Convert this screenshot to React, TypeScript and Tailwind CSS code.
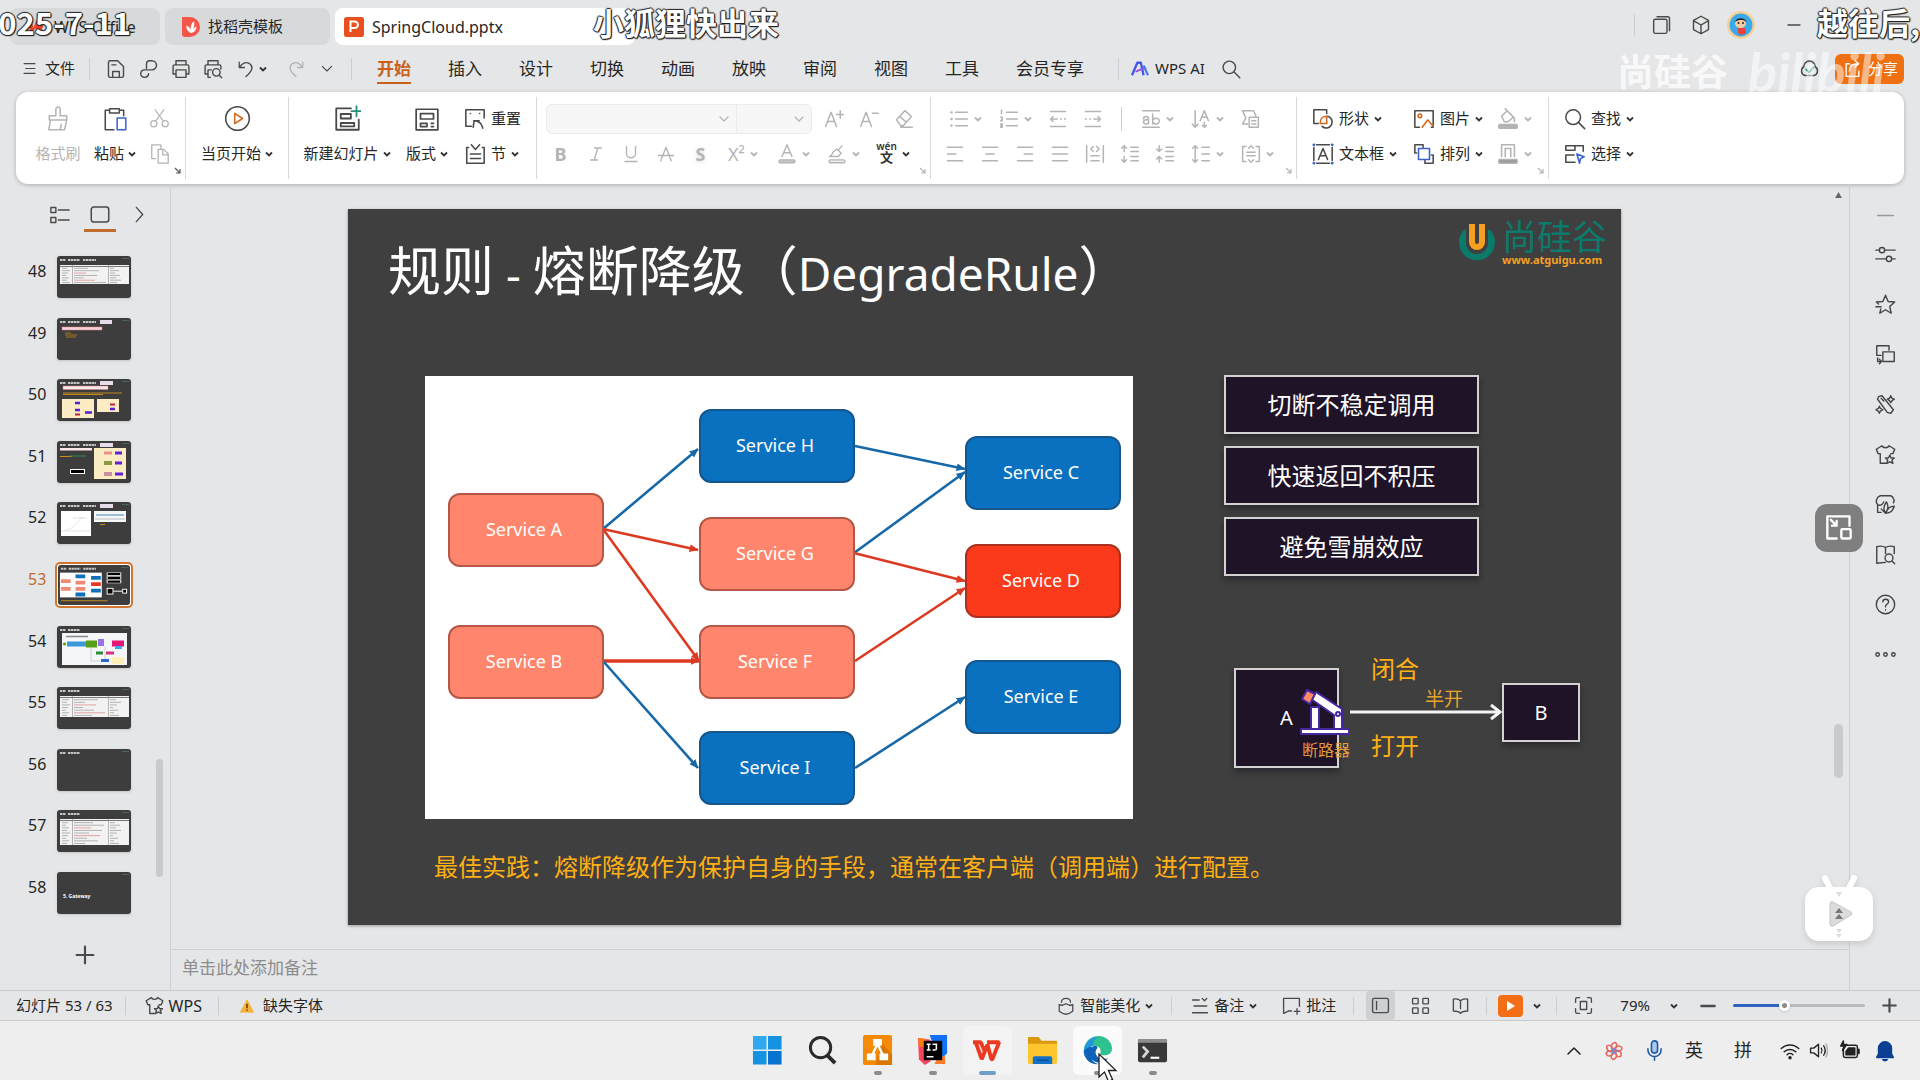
import type { ReactNode } from "react";

/* ---------- icon helpers ---------- */

type IconProps = { children: ReactNode; size?: number; color?: string; sw?: number };

function Icon({ children, size = 22, color = "#4a4a4a", sw = 1.7 }: IconProps) {
  return (
    <svg width={size} height={size} viewBox="0 0 24 24" fill="none" stroke={color} strokeWidth={sw} strokeLinecap="round" strokeLinejoin="round" className="shrink-0" aria-hidden="true">
      {children}
    </svg>
  );
}

function Caret({ color = "#333333" }: { color?: string }) {
  return (
    <svg width="8" height="8" viewBox="0 0 8 8" fill="none" stroke={color} strokeWidth="1.8" className="shrink-0" aria-hidden="true">
      <path d="M1 2.5 4 5.5 7 2.5" />
    </svg>
  );
}

const FAINT = "#b4b4b4";

function VSep({ className = "" }: { className?: string }) {
  return <span className={"w-px shrink-0 bg-[#cdced0] " + className} />;
}

function Corner({ color = "#b4b4b4" }: { color?: string }) {
  return (
    <svg width="7" height="7" viewBox="0 0 7 7" fill="none" stroke={color} strokeWidth="1.2" className="absolute right-1 bottom-[5px]" aria-hidden="true">
      <path d="M1 1 6 6M6 2V6H2" />
    </svg>
  );
}

/* ---------- title bar ---------- */

function TitleBar() {
  return (
    <header className="flex h-[45px] shrink-0 pt-2 pl-[10px] text-[15px]">
      <button className="flex w-[150px] items-center gap-2 rounded-lg bg-[#d8d9da] pl-4 text-base">
        <svg width="20" height="16" viewBox="0 0 24 20" aria-hidden="true"><path d="M1 2h5l3 9 3-9h11l-5 16h-5l-2-7-3 7H6z" fill="#e8452c" /></svg>
        WPS Office
      </button>
      <button className="ml-[5px] flex w-[165px] items-center gap-2 rounded-lg bg-[#d8d9da] pl-[17px]">
        <svg width="18" height="20" viewBox="0 0 18 20" aria-hidden="true">
          <path d="M0 0h8a10 10 0 0 1 0 20H3a3 3 0 0 1-3-3z" fill="#f4574a" />
          <path d="M9 16C5 14 4 11 4.500 8.500 7 10 8 11 8.500 13 8.500 9 9.500 6 12 4c.5 3 .5 5-1 8 1-1 2-2 3.500-2.500C14.500 13 12 15.500 9 16z" fill="#fff" />
        </svg>
        找稻壳模板
      </button>
      <button className="ml-[5px] flex w-[300px] items-center gap-2 rounded-lg bg-white pl-[9px] text-base">
        <svg width="20" height="20" viewBox="0 0 20 20" aria-hidden="true">
          <rect width="20" height="20" rx="2.500" fill="#e9501f" />
          <path d="M6.500 15V4.500h4.200a3.200 3.200 0 0 1 0 6.500H6.500" fill="none" stroke="#fff" strokeWidth="2" />
        </svg>
        SpringCloud.pptx
      </button>
      <div className="mr-[117px] ml-auto flex items-center pb-[3px]">
        <VSep className="mr-4 h-[22px]" />
        <button aria-label="窗口" className="flex w-10 pl-px"><Icon size={20}><rect x="2" y="5" width="16" height="17" rx="2" /><path d="M6 2h13a2 2 0 0 1 2 2v15" /></Icon></button>
        <button aria-label="应用" className="flex w-9"><Icon size={20}><path d="M12 1.500 21 6.500v11L12 22.500 3 17.500v-11zM3.500 7 12 12l8.500-5M12 12v10" /></Icon></button>
        <button aria-label="账号" className="mr-[30px] flex">
          <svg width="28" height="28" viewBox="0 0 28 28" aria-hidden="true">
            <circle cx="14" cy="14" r="12.700" fill="#3aa9ea" stroke="#f7cf95" strokeWidth="2.500" />
            <ellipse cx="13.500" cy="12.500" rx="5.500" ry="4.500" fill="#f5cba6" />
            <path d="M8 11c1-5 10-5 12 0-2-1.500-4-2-6-2s-4 .5-6 2z" fill="#26242b" />
            <circle cx="11.500" cy="12" r="1" fill="#222" /><circle cx="16" cy="12" r="1" fill="#222" />
            <path d="M11 17h7l1 5c-3 2-6 2-8 0z" fill="#e8403a" />
          </svg>
        </button>
        <button aria-label="最小化" className="flex"><Icon size={18}><path d="M4 12h16" /></Icon></button>
      </div>
    </header>
  );
}

/* ---------- menu row ---------- */

const MENUS = ["插入", "设计", "切换", "动画", "放映", "审阅", "视图", "工具", "会员专享"];

function MenuRow() {
  return (
    <nav className="flex h-[47px] shrink-0 items-center pl-[23px]">
      <button className="flex items-center gap-[9px] text-[15px]">
        <Icon size={13} sw={2.2}><path d="M2 3h20M5 12h17M2 21h20" /></Icon>
        文件
      </button>
      <VSep className="mr-4 ml-[14px] h-[22px]" />
      <div className="flex items-center">
        <button aria-label="保存" className="flex w-[33px]"><Icon size={20}><path d="M5 2h9l7 7v11a2 2 0 0 1-2 2H5a2 2 0 0 1-2-2V4a2 2 0 0 1 2-2zM8 22v-7h8v7M7 7h5" /></Icon></button>
        <button aria-label="导出PDF" className="flex w-8"><Icon size={20}><path d="M9 11V6a4 4 0 0 1 4-4h2.500a5.500 5.500 0 0 1 0 11H6.500a4.500 4.500 0 0 0 0 9c3 0 5-1.500 5-4.500" /></Icon></button>
        <button aria-label="打印" className="flex w-8"><Icon size={20}><path d="M6 7V2h12v5M6 18H2.500V9a2 2 0 0 1 2-2h15a2 2 0 0 1 2 2v9H18M6 13h12v9H6z" /></Icon></button>
        <button aria-label="打印预览" className="flex w-[34px]"><Icon size={20}><path d="M6 7V2h12v5M6 18H2.500V9a2 2 0 0 1 2-2h15a2 2 0 0 1 2 2v3M9 22H6v-9h4" /><circle cx="16" cy="16" r="4.500" /><path d="m19.500 19.500 3 3" /></Icon></button>
        <button aria-label="撤销" className="flex w-[50px] items-center gap-1"><Icon size={18}><path d="M3 3v7h7M3.500 9.500C7 3 13 2 17 5c5 4 4 9-5 17" /></Icon><Caret /></button>
        <button aria-label="恢复" className="flex w-8"><Icon size={18} color={FAINT}><path d="M21 3v7h-7M20.500 9.500C17 3 11 2 7 5c-5 4-4 9 5 17" /></Icon></button>
        <button aria-label="更多" className="flex w-5"><Icon size={16}><path d="m5 8 7 7 7-7" /></Icon></button>
      </div>
      <VSep className="mr-[25px] ml-[12px] h-[22px]" />
      <div className="flex items-center gap-[37px] text-[17px]">
        <button className="relative font-bold text-[#c9611a] after:absolute after:inset-x-0 after:-bottom-[3px] after:h-[2px] after:bg-[#c9611a]">开始</button>
        {MENUS.map((m) => (
          <button key={m} className="whitespace-nowrap">{m}</button>
        ))}
      </div>
      <VSep className="mr-[11px] ml-[34px] h-[22px]" />
      <button className="flex items-center gap-[5px] text-[15px] whitespace-nowrap">
        <svg width="20" height="16" viewBox="0 0 20 18" aria-hidden="true">
          <path d="M1 16 7 2h4l3 14" fill="none" stroke="#4457e8" strokeWidth="2.600" strokeLinejoin="round" />
          <path d="M5 12c4-1 6-4 12-4" fill="none" stroke="#a04be0" strokeWidth="2.200" />
          <path d="m14 5 5 11" stroke="#3f7cf4" strokeWidth="2.400" />
        </svg>
        WPS AI
      </button>
      <button aria-label="搜索" className="ml-4 flex"><Icon size={20}><circle cx="10" cy="10" r="7.500" /><path d="m16 16 6.500 6.500" /></Icon></button>
      <div className="mr-4 ml-auto flex items-center">
        <button aria-label="云同步" className="mr-[15px] flex">
          <Icon size={21}><path d="M7 20a5.500 5.500 0 0 1-1.500-10 6.500 6.500 0 0 1 13 0A5.500 5.500 0 0 1 17 20z" /><path d="m8 13 3.500 3.500 5-6" stroke="#1e9a72" /></Icon>
        </button>
        <button className="flex h-[30px] w-[69px] items-center gap-[6px] rounded-md bg-[#ee7012] pl-2 text-[15px] text-white">
          <Icon size={19} color="#ffffff"><path d="M8 6H4v16h16v-7M8 15c0-6 4-9 11-9M15 2l5 4-5 4" /></Icon>
          分享
        </button>
      </div>
    </nav>
  );
}

/* ---------- ribbon ---------- */

function BigButton({ icon, label, caret, className, faint }: { icon: ReactNode; label: string; caret?: boolean; className: string; faint?: boolean }) {
  return (
    <button className={"flex shrink-0 flex-col items-center text-[15px] whitespace-nowrap " + (faint ? "text-[#b4b4b4] " : "") + className}>
      <span className="flex h-[35px] items-center">{icon}</span>
      <span className="flex h-[35px] items-center gap-1">{label}{caret && <Caret />}</span>
    </button>
  );
}

function Cell({ children, label, wide, dark }: { children: ReactNode; label: string; wide?: boolean; dark?: boolean }) {
  return (
    <button aria-label={label} className={"flex h-[35px] shrink-0 items-center justify-center gap-[5px] " + (wide ? "w-[50px]" : "w-[35px]")}>
      {children}
      {wide && <Caret color={dark ? "#333333" : FAINT} />}
    </button>
  );
}

function Labeled({ icon, label, caret = true }: { icon: ReactNode; label: string; caret?: boolean }) {
  return (
    <button className="flex h-[35px] items-center text-[15px] whitespace-nowrap">
      {icon}
      <span className={label ? "mr-[5px] ml-[5px]" : "mr-[5px]"}>{label}</span>
      {caret && <Caret color={label ? "#333333" : FAINT} />}
    </button>
  );
}

const fi = (d: string, size = 20) => <Icon size={size} color={FAINT} sw={1.8}><path d={d} /></Icon>;

function Glyph({ children, className = "" }: { children: ReactNode; className?: string }) {
  return <span className={"text-lg text-[#b4b4b4] " + className}>{children}</span>;
}

function Ribbon() {
  const group = "relative flex shrink-0 border-r border-[#d9d9d9]";
  return (
    <section className="mx-4 flex h-[92px] shrink-0 rounded-xl bg-white shadow-[0_1px_4px_rgba(0,0,0,0.25)]">
      <div className="flex flex-1 py-[5px]">
        <div className={group + " w-[170px] pt-1 pl-3"}>
          <BigButton faint className="w-[60px]" label="格式刷" icon={<Icon size={26} color={FAINT} sw={1.4}><path d="M10 9V3a2 2 0 0 1 4 0v6h6v4H4V9zM5 13 3.500 22H18l2-9M14 22l1-5" /></Icon>} />
          <BigButton caret className="w-[54px]" label="粘贴" icon={<Icon size={26} sw={1.4}><path d="M7 4H3v18h8M16 4h4v5M7 2.500h9v4H7z" /><rect x="14" y="11" width="8" height="11" stroke="#3a62d0" fill="#fff" /></Icon>} />
          <div>
            <Cell label="剪切"><Icon size={21} color={FAINT} sw={1.4}><circle cx="5.500" cy="18" r="3.500" /><circle cx="18.500" cy="18" r="3.500" /><path d="M7.500 15 17 2M16.500 15 7 2" /></Icon></Cell>
            <Cell label="复制"><Icon size={22} color={FAINT} sw={1.4}><path d="M7 17H3V2h10v4M10 7h6l5 5v10H10zM15 7v6h6" /></Icon></Cell>
          </div>
          <Corner color="#555555" />
        </div>
        <div className={group + " w-[103px] justify-center pt-1"}>
          <BigButton caret className="w-24" label="当页开始" icon={<Icon size={27} sw={1.4}><circle cx="12" cy="12" r="10.500" /><path d="M9.500 7.500v9l7-4.500z" stroke="#d2691e" /></Icon>} />
        </div>
        <div className={group + " w-[248px] pt-1 pl-[8px]"}>
          <BigButton caret className="w-[100px]" label="新建幻灯片" icon={<Icon size={27} sw={1.6}><path d="M15 3H2v19h20v-9M6 8h9v4H6zM6 16h12v3H6z" /><path d="M20 1v9M15.500 5.500h9" stroke="#2a9078" /></Icon>} />
          <BigButton caret className="w-[60px]" label="版式" icon={<Icon size={26} sw={1.6}><path d="M2 3h20v19H2zM6 7h12v5H6zM6 16h6v3H6zM16 16h2M16 19h2" /></Icon>} />
          <div className="ml-[7px]">
            <Labeled caret={false} label="重置" icon={<Icon><path d="M8 20H2V2h20v9M11 14l-1 7M10.500 14l6 0M10.500 14c6 0 9 3 10 8M7 6h.1M17 6h.1" /></Icon>} />
            <Labeled label="节" icon={<Icon><path d="M5 5H3v17h19V5h-2M8 2l4.500 5L17 2M7 12h11M7 17h11" /></Icon>} />
          </div>
        </div>
        <div className={group + " w-[394px] flex-col pt-1"}>
          <div className="flex h-[35px] items-center pl-[9px]">
            <div className="mr-1 flex h-[30px] w-[266px] overflow-hidden rounded-md border border-[#ececec] bg-[#f7f7f7]">
              <div className="flex w-[190px] items-center border-r border-[#ececec] pr-1">
                <select aria-label="字体" disabled className="w-full appearance-none bg-transparent"><option></option></select>
                {fi("m6 9 6 6 6-6", 16)}
              </div>
              <div className="flex flex-1 items-center pr-1">
                <select aria-label="字号" disabled className="w-full appearance-none bg-transparent"><option></option></select>
                {fi("m6 9 6 6 6-6", 16)}
              </div>
            </div>
            <Cell label="增大字号">{fi("M2 21 8.500 4 15 21M4.500 15h8M19.500 2v9M15 6.500h9")}</Cell>
            <Cell label="减小字号">{fi("M2 21 8.500 4 15 21M4.500 15h8M16 5h7")}</Cell>
            <Cell label="清除格式">{fi("M3 13 13 2l8 7-10 11H8zM7 9l8 7M8 22h14")}</Cell>
          </div>
          <div className="flex h-[35px] items-center pl-[6px]">
            <Cell label="加粗"><Glyph className="font-bold">B</Glyph></Cell>
            <Cell label="倾斜">{fi("M10 4h9M5 20h9M14.500 4 9.500 20", 18)}</Cell>
            <Cell label="下划线">{fi("M6 2v9a6 6 0 0 0 12 0V2M4 22h16", 18)}</Cell>
            <Cell label="删除线">{fi("M5 21 12 3l7 18M2 14h20", 18)}</Cell>
            <Cell label="阴影"><Glyph className="font-bold drop-shadow-sm">S</Glyph></Cell>
            <Cell wide label="上标"><Glyph>X²</Glyph></Cell>
            <Cell wide label="字体颜色"><Icon size={20} color={FAINT} sw={1.7}><path d="M6 15 12 1l6 14M8 10.500h8" /><rect x="2.500" y="19" width="19" height="3.500" rx="1.500" fill="#c8c8c8" /></Icon></Cell>
            <Cell wide label="突出显示"><Icon size={20} color={FAINT} sw={1.6}><path d="M3 15c3-1 3-3 4-5l5-4 5 5-4 4H3zM14 7l4-5" /><rect x="2.500" y="19" width="19" height="3.500" rx="1.500" fill="#eeeeee" /></Icon></Cell>
            <Cell wide dark label="拼音指南">
              <span className="flex flex-col items-center text-[#333333]">
                <span className="h-[8px] text-[10px] leading-[7px] font-semibold">wén</span>
                <span className="text-[13px] leading-[13px] font-semibold">文</span>
              </span>
            </Cell>
          </div>
          <Corner />
        </div>
        <div className={group + " w-[366px] flex-col pt-1"}>
          <div className="flex h-[35px] items-center pl-[9px]">
            <Cell wide label="项目符号">{fi("M8 4h14M8 12h14M8 20h14M2.500 3.500h1v1h-1zM2.500 11.500h1v1h-1zM2.500 19.500h1v1h-1z")}</Cell>
            <Cell wide label="编号">{fi("M9 4h13M9 12h13M9 20h13M3 1.500v4M2 10h2v2l-2 2h2M2 18h2v4H2M2 20h2")}</Cell>
            <Cell label="减少缩进">{fi("M3 3h18M3 21h18M11 12H3M6 9l-3 3 3 3M15 12h1M20 12h1")}</Cell>
            <Cell label="增加缩进">{fi("M3 3h18M3 21h18M3 12h1M8 12h1M13 12h8M18 9l3 3-3 3")}</Cell>
            <VSep className="mr-[10px] ml-[11px] h-6" />
            <Cell wide label="字符间距">{fi("M2 2h20M2 22h20M9 18v-6a3 3 0 0 0-6 0M9 15a3 2.500 0 1 1-3-2h3M14 6v12M14 15a4 3.500 0 1 0 0-1")}</Cell>
            <Cell wide label="文字方向">{fi("M5 2v20M1.500 18 5 22l3.500-4M11 14l5-12 5 12M13 10h6M16 16v6M13.500 19.500 16 22l2.500-2.500")}</Cell>
            <Cell label="转换图示">{fi("M9 18H3l4-7-4-9h13l3 6M11 10h11v12H11zM14 14h5M14 18h5")}</Cell>
          </div>
          <div className="flex h-[35px] items-center pl-[6px]">
            <Cell label="左对齐">{fi("M3 4h18M3 12h10M3 20h18")}</Cell>
            <Cell label="居中">{fi("M3 4h18M7 12h10M3 20h18")}</Cell>
            <Cell label="右对齐">{fi("M3 4h18M11 12h10M3 20h18")}</Cell>
            <Cell label="两端对齐">{fi("M3 4h18M3 12h18M3 20h18")}</Cell>
            <Cell label="分散对齐">{fi("M2 2v20M22 2v20M7 14h10M7 20h10M10 3 7 6l3 3M14 3l3 3-3 3")}</Cell>
            <Cell label="增加段落间距">{fi("M5 9V2M2 5l3-3 3 3M5 15v7M2 19l3 3 3-3M13 4h9M13 9h9M13 15h9M13 20h9")}</Cell>
            <Cell label="减少段落间距">{fi("M5 2v7M2 6l3 3 3-3M5 22v-7M2 18l3-3 3 3M13 4h9M13 9h9M13 15h9M13 20h9")}</Cell>
            <Cell wide label="行距">{fi("M5 2v20M2 5l3-3 3 3M2 19l3 3 3-3M13 4h9M13 12h9M13 20h9")}</Cell>
            <Cell wide label="对齐文本">{fi("M6 3H2v18h4M18 3h4v18h-4M7 10h10M7 14h10M9 5l3-3 3 3M9 19l3 3 3-3")}</Cell>
          </div>
          <Corner />
        </div>
        <div className={group + " w-[252px] pt-1 pl-[15px]"}>
          <div className="w-[101px]">
            <Labeled label="形状" icon={<Icon><path d="M7 17H2V2h14v4M17 9a6.500 6.500 0 1 1-6 11" /><path d="M9 17c0-6 2-8 7-8v8z" stroke="#d2691e" /></Icon>} />
            <Labeled label="文本框" icon={<Icon><path d="M2 5v14M22 5v14M5 2h14M5 22h14M7 18l5-12 5 12M9 14h6" /><path d="M2 2h.1M22 2h.1M2 22h.1M22 22h.1" stroke="#3a62d0" strokeWidth="3" /></Icon>} />
          </div>
          <div className="w-[84px]">
            <Labeled label="图片" icon={<Icon><path d="M7 21H2V3h20v18h-2" /><circle cx="7.500" cy="8.500" r="2" stroke="#d2691e" /><path d="m10 21 6-8 6 7" stroke="#d2691e" /></Icon>} />
            <Labeled label="排列" icon={<Icon><path d="M4 11H2V2h9v3M20 13h2v9h-9v-3" /><rect x="6" y="6" width="12" height="12" stroke="#3a62d0" /></Icon>} />
          </div>
          <div>
            <Labeled label="" icon={<Icon color={FAINT}><path d="m5 9 6-6 7 7-6 5H8zM9 1l4 4M19 11v4" /><rect x="2" y="18" width="20" height="4" rx="1" fill={FAINT} /></Icon>} />
            <Labeled label="" icon={<Icon color={FAINT}><path d="M5 15V2h14v13M9 15V6h6v9" /><rect x="2" y="18" width="20" height="4" rx="1" fill="#9a9a9a" /></Icon>} />
          </div>
          <Corner />
        </div>
        <div className="pt-1 pl-[15px]">
          <Labeled label="查找" icon={<Icon><circle cx="10" cy="10" r="8" /><path d="m16 16 6.500 6.500" /></Icon>} />
          <Labeled label="选择" icon={<Icon><path d="M12 8H2V3h19v6M7 3h5v5M12 21H2v-8h9" /><path d="m14 12 8 3-4 2-1 5z" stroke="#3a62d0" /></Icon>} />
        </div>
      </div>
    </section>
  );
}

/* ---------- slide list ---------- */

function TableMini({ rows, y, h, seed }: { rows: number; y: number; h: number; seed: number }) {
  const step = h / rows;
  return (
    <g>
      <rect x="3" y={y} width="69" height={h} fill="#f2f2f2" />
      <path d={`M3 ${y + 1.5}H72`} stroke="#777" strokeWidth="1" />
      {Array.from({ length: rows - 1 }, (_, i) => {
        const ly = y + step * (i + 1.4);
        return (
          <g key={i} stroke="#ababab" strokeWidth="0.9">
            <path d={`M5 ${ly}H${9 + ((i * 3 + seed) % 5)}`} />
            <path d={`M17 ${ly}H${26 + ((i * 11 + seed * 5) % 24)}`} stroke={i === 2 || i === 5 ? "#e09a9a" : "#ababab"} />
            <path d={`M53 ${ly}H${56 + ((i * 5 + seed) % 9)}`} />
          </g>
        );
      })}
      <path d={`M15.500 ${y}V${y + h}M51.500 ${y}V${y + h}`} stroke="#8a8a8a" strokeWidth="0.6" />
    </g>
  );
}

function ThumbArt({ n }: { n: number }) {
  switch (n) {
    case 48:
      return <TableMini rows={8} y={9} h={19} seed={1} />;
    case 49:
      return <g><rect x="5" y="9" width="40" height="3" fill="#f6d3d8" stroke="#e07f88" strokeWidth="0.5" /><path d="M8 15h6M8 17h12M9 19h10" stroke="#a8771f" strokeWidth="1" /></g>;
    case 50:
      return (
        <g>
          <rect x="6" y="7" width="45" height="3.500" fill="#fbe7ea" stroke="#e07f88" strokeWidth="0.5" />
          <path d="M6 14h59M6 15.500h40" stroke="#c08a20" strokeWidth="1" />
          <rect x="5" y="20" width="32" height="19" fill="#fbecc4" /><rect x="40" y="20" width="22" height="13" fill="#fbecc4" />
          <path d="M18 24h5M18 31h5M28 33.500h7M53 30h5" stroke="#5a1fd0" strokeWidth="2.500" /><path d="M18 35.500h5M53 25.500h5" stroke="#c02040" strokeWidth="2" />
        </g>
      );
    case 51:
      return (
        <g>
          <rect x="3" y="7" width="32" height="2.500" fill="#fbe7ea" /><path d="M3 15.500h12" stroke="#d08a20" /><path d="M12 15h17" stroke="#3a8a4a" />
          <rect x="13.500" y="28.500" width="14" height="4" fill="#000" stroke="#fff" />
          <rect x="37" y="7" width="32" height="31" fill="#fbecc4" />
          <path d="M47 12h8" stroke="#e89090" strokeWidth="3" /><path d="M47 22h8" stroke="#8a9a40" strokeWidth="4" /><path d="M47 33h8" stroke="#c890a0" strokeWidth="4" />
          <path d="M58 12h7M58 22h7M58 33h8" stroke="#6020d8" strokeWidth="3" />
        </g>
      );
    case 52:
      return (
        <g>
          <rect x="4" y="9" width="30" height="25" fill="#fff" /><path d="M8 28c8 0 10-7 18-13M4 29h29M16 16h14" stroke="#cfcfcf" strokeWidth="0.6" fill="none" />
          <rect x="37" y="9" width="32" height="11" fill="#f5f8fa" /><path d="M39 13h28" stroke="#4a86a8" /><path d="M38 17h30" stroke="#b9b9b9" /><path d="M43 22.500h5" stroke="#c08a20" />
        </g>
      );
    case 53:
      return (
        <g>
          <rect x="2" y="8" width="43" height="26" fill="#fff" />
          <path d="M3 17h10M3 25h10M18 18.500h10M18 25h10" stroke="#f08a72" strokeWidth="4" />
          <path d="M18 12h10M18 31h10M34 13.500h10M34 27h10" stroke="#1070b8" strokeWidth="4" /><path d="M34 20h10" stroke="#e83820" strokeWidth="4" />
          <path d="M50 9.500h15M50 13.500h15M50 17.500h15" stroke="#fff" strokeWidth="3.500" /><path d="M51 9.500h13M51 13.500h13M51 17.500h13" stroke="#000" strokeWidth="2.200" />
          <rect x="50.500" y="24.500" width="6" height="6" fill="#000" stroke="#fff" /><rect x="66.500" y="25.500" width="4" height="4" fill="#000" stroke="#fff" />
          <path d="M57 27.500h9" stroke="#fff" /><path d="M3 37.500h48" stroke="#c08a20" />
        </g>
      );
    case 54:
      return (
        <g>
          <rect x="5" y="7" width="65" height="32" fill="#f4f6f7" /><path d="M9 10.500h22" stroke="#888" strokeWidth="1.500" />
          <circle cx="7.500" cy="18" r="1.600" fill="#58a018" /><path d="M10 18h19" stroke="#3a9ad8" strokeWidth="5" /><path d="M29 18h11" stroke="#58a018" strokeWidth="7" />
          <path d="M41 16.500h6" stroke="#9a70e8" strokeWidth="7" /><path d="M55 17.500h12" stroke="#e01878" strokeWidth="6" /><path d="M58 21.500h7" stroke="#38a8f0" strokeWidth="3" />
          <path d="M39 27h7" stroke="#288a38" strokeWidth="3" /><path d="M49 27h8" stroke="#d83080" strokeWidth="3" /><path d="M44 34.500h8" stroke="#3068c8" strokeWidth="3" />
          <path d="M34 22v13h9M48 21v12" stroke="#aaa" strokeWidth="0.500" fill="none" /><rect x="55" y="31" width="12" height="7" fill="#fbf0b8" />
        </g>
      );
    case 55:
      return <TableMini rows={8} y={9} h={21} seed={3} />;
    case 57:
      return <TableMini rows={10} y={9} h={26} seed={2} />;
    case 58:
      return <text x="6" y="26" fill="#fff" fontSize="5" fontWeight="bold">5. Gateway</text>;
    default:
      return null;
  }
}

function Thumb({ n }: { n: number }) {
  const extra = n >= 49 && n <= 52;
  return (
    <svg viewBox="0 0 74 42" className="h-full w-full rounded-[3px] bg-[#3d3d3d]" preserveAspectRatio="none" aria-hidden="true">
      {n !== 58 && <path d={n > 53 ? "M3 4H9M11 4H23" : "M3 4H9M11 4H23M26 4H39"} stroke="#c6c6c6" strokeWidth="2.200" strokeDasharray="2.400 .5" />}
      {extra && <path d={n === 49 ? "M43 4h12" : "M43 4h13"} stroke="#e6dcea" strokeWidth="4" />}
      <path d="M65 2.500h7" stroke="#4c7068" strokeWidth="0.800" />
      <ThumbArt n={n} />
    </svg>
  );
}

const SLIDES = [48, 49, 50, 51, 52, 53, 54, 55, 56, 57, 58];

function SlideList() {
  return (
    <aside className="relative flex w-[171px] shrink-0 flex-col border-r border-[#cfd0d2]">
      <div className="flex h-[69px] items-start gap-[14px] pt-[21px] pl-[50px]">
        <button aria-label="大纲" className="flex h-7 items-start"><Icon size={20}><path d="M1 3h6v6H1zM1 15h6v6H1zM10 6h13M10 18h13" /></Icon></button>
        <button aria-label="幻灯片" className="flex h-[27px] w-8 items-start justify-center border-b-[3px] border-[#c06a2c]"><Icon size={20} sw={1.800}><rect x="1.500" y="2.500" width="21" height="18" rx="3" /></Icon></button>
        <button aria-label="收起" className="flex h-7 items-start"><Icon size={19}><path d="m8 3 8 9-8 9" /></Icon></button>
      </div>
      <ol className="flex flex-1 flex-col justify-between pt-[3px] pb-[5px]">
        {SLIDES.map((n) => (
          <li key={n} className="h-[42px]">
            <button className="flex items-start pl-7">
              <span className={"h-[42px] w-[29px] pt-[3px] text-left text-base leading-6 " + (n === 53 ? "text-[#c06a2c]" : "")}>{n}</span>
              <span className={"h-[42px] w-[74px] " + (n === 53 ? "rounded-[3px] bg-white p-px outline-2 outline-[#d2752f]" : "shadow-sm")}>
                <Thumb n={n} />
              </span>
            </button>
          </li>
        ))}
      </ol>
      <div className="flex h-[71px] items-center pl-[75px]">
        <button aria-label="新建幻灯片" className="flex"><Icon size={20} sw={2.600}><path d="M12 2v20M2 12h20" /></Icon></button>
      </div>
      <span className="absolute right-[7px] bottom-[113px] h-[118px] w-[7px] rounded-full bg-[#c9cacb]" />
    </aside>
  );
}

/* ---------- slide ---------- */

const BLUE = "bg-[#0a70c0] border-[#15568c]";
const SALMON = "bg-[#ff866c] border-[#b65647]";
const RED = "bg-[#fb3a1c] border-[#a8321f]";

const NODES = [
  { id: "A", pos: "left-[23px] top-[117px]", tone: SALMON },
  { id: "B", pos: "left-[23px] top-[249px]", tone: SALMON },
  { id: "H", pos: "left-[274px] top-[33px]", tone: BLUE },
  { id: "G", pos: "left-[274px] top-[141px]", tone: SALMON },
  { id: "F", pos: "left-[274px] top-[249px]", tone: SALMON },
  { id: "I", pos: "left-[274px] top-[355px]", tone: BLUE },
  { id: "C", pos: "left-[540px] top-[60px]", tone: BLUE },
  { id: "D", pos: "left-[540px] top-[168px]", tone: RED },
  { id: "E", pos: "left-[540px] top-[284px]", tone: BLUE },
];

const EDGES: [number, number, number, number, "b" | "r"][] = [
  [178, 153, 273, 73, "b"],
  [178, 153, 273, 174, "r"],
  [178, 153, 274, 285, "r"],
  [178, 285, 274, 285, "r"],
  [178, 285, 273, 392, "b"],
  [430, 70, 540, 93, "b"],
  [429, 177, 540, 96, "b"],
  [429, 177, 540, 205, "r"],
  [430, 285, 540, 212, "r"],
  [430, 392, 540, 321, "b"],
];

function Diagram() {
  return (
    <div className="absolute top-[167px] left-[77px] h-[443px] w-[708px] bg-white">
      <svg width="708" height="443" className="absolute inset-0" aria-hidden="true">
        <defs>
          <marker id="mb" viewBox="0 0 8 8" refX="7.500" refY="4" markerWidth="9" markerHeight="9" markerUnits="userSpaceOnUse" orient="auto"><path d="M0 .5 8 4 0 7.500z" fill="#1668a8" /></marker>
          <marker id="mr" viewBox="0 0 8 8" refX="7.500" refY="4" markerWidth="9" markerHeight="9" markerUnits="userSpaceOnUse" orient="auto"><path d="M0 .5 8 4 0 7.500z" fill="#dc3a20" /></marker>
        </defs>
        {EDGES.map(([x1, y1, x2, y2, c], i) => (
          <line key={i} x1={x1} y1={y1} x2={x2} y2={y2} stroke={c === "b" ? "#1668a8" : "#dc3a20"} strokeWidth={y1 === y2 ? 3.5 : 2.6} markerEnd={c === "b" ? "url(#mb)" : "url(#mr)"} />
        ))}
      </svg>
      {NODES.map((n) => (
        <div key={n.id} className={"absolute flex h-[74px] w-[156px] items-center justify-center rounded-xl border-2 pr-1 pb-0.5 text-[18px] text-white " + n.pos + " " + n.tone}>
          Service {n.id}
        </div>
      ))}
    </div>
  );
}

const POINTS = ["切断不稳定调用", "快速返回不积压", "避免雪崩效应"];

function Slide() {
  const box = "flex items-center justify-center border-2 border-[#d2d2d2] bg-[#1f1328] text-white shadow-[0_4px_6px_rgba(20,16,26,0.45)]";
  return (
    <article className="relative h-[716px] w-[1273px] shrink-0 bg-[#3f3f3f] shadow-[0_1px_3px_rgba(0,0,0,0.35)]">
      <h1 className="absolute top-[22px] left-[40px] text-[53px] leading-[80px] whitespace-nowrap text-white">
        规则<span className="text-[46px]"> - </span>熔断降级（<span className="text-[46px]">DegradeRule</span>）
      </h1>
      <div className="absolute top-[12px] left-[1110px] flex items-start">
        <svg width="38" height="42" viewBox="0 0 38 42" aria-hidden="true">
          <path d="M5 10A18 18 0 1 0 33 10L30 8v14a11 11 0 0 1-22 0V8z" fill="#0b7a6a" />
          <path d="M11 3h6v18a2 2 0 0 0 4 0V3h6v18a8 8 0 0 1-16 0z" fill="#f4a021" />
        </svg>
        <div className="pl-[6px]">
          <div className="h-[26px] text-[35px] leading-[32px] text-[#0b7a6a]">尚硅谷</div>
          <div className="pt-1 text-[11px] leading-[18px] font-bold text-[#f4a021]">www.atguigu.com</div>
        </div>
      </div>
      <Diagram />
      <div className="absolute top-[166px] left-[876px] flex w-[255px] flex-col gap-[12px] text-[24px]">
        {POINTS.map((p) => (
          <div key={p} className={box + " h-[59px]"}>{p}</div>
        ))}
      </div>
      <div className={box + " absolute top-[459px] left-[886px] h-[100px] w-[105px] text-xl"}>A</div>
      <div className={box + " absolute top-[474px] left-[1154px] h-[59px] w-[78px] text-xl"}>B</div>
      <svg width="154" height="24" className="absolute top-[491px] left-[1001px]" fill="none" stroke="#f4f4f4" strokeWidth="3" aria-hidden="true">
        <path d="M1 12H150M142 5l9 7-9 7" />
      </svg>
      <svg width="50" height="48" viewBox="0 0 50 48" className="absolute top-[480px] left-[952px]" strokeLinejoin="round" aria-hidden="true">
        <g stroke="#4527a0" strokeWidth="2" fill="#fff">
          <path d="M11 18h8v23h-8z" /><path d="m11 10 5-7 26 17v21h-8V26z" />
          <path d="m2 10 5-9 8 4-5 10z" fill="#ff8a65" /><path d="M1 40h48v5H1z" /><circle cx="38" cy="25" r="2" />
        </g>
      </svg>
      <span className="absolute top-[444px] left-[1023px] text-[24px] leading-8 text-[#ffb014]">闭合</span>
      <span className="absolute top-[476px] left-[1077px] text-[19px] leading-7 text-[#e8a42c]">半开</span>
      <span className="absolute top-[521px] left-[1023px] text-[24px] leading-8 text-[#ffb014]">打开</span>
      <span className="absolute top-[529px] left-[954px] text-base leading-6 text-[#e39a3a]">断路器</span>
      <p className="absolute top-[640px] left-[86px] text-[24px] leading-9 whitespace-nowrap text-[#ffb014]">
        最佳实践：熔断降级作为保护自身的手段，通常在客户端（调用端）进行配置。
      </p>
    </article>
  );
}

/* ---------- right rail ---------- */

const RAIL: { label: string; art: ReactNode }[] = [
  { label: "折叠", art: <path d="M3 12h18" /> },
  { label: "属性", art: <><circle cx="8" cy="7" r="3" /><circle cx="16" cy="17" r="3" /><path d="M1 7h4M11 7h12M1 17h12M19 17h4" /></> },
  { label: "动画", art: <path d="m12 1.500 3 7 7.500.7-5.700 5L18.500 22 12 18l-6.500 4 1.200-5M1.500 9.200 9 8.500 12 1.500M1.500 9.200 4 11.500M1 14.500h6" /> },
  { label: "切换", art: <><path d="M7 13H2V2h14v5" /><rect x="9" y="9" width="13" height="11" /><path d="M3 16v4h4M5 17.500 7.500 20 5 22.500" /></> },
  { label: "智能", art: <path d="m4 3 4-1 13 16-3 4-4-1L3 6zM18 2l1.500 3L22 6l-2.500 1.500L18 10l-1.500-2.500L14 6l2.500-1zM5 14l1.200 2.500L9 18l-2.800 1.500L5 22l-1.200-2.500L1 18l2.800-1.500zM7 5l3 3" /> },
  { label: "美化", art: <path d="M13 22H6V11H3.500L1.500 6 8 2c1 3 7 3 8 0l6.500 4-2 5H18M17 12.500l1.200 3.200L22 16l-2.600 2.400L20.500 22 17 20.300 13.500 22l1-3.600L12 16l3.600-.3z" /> },
  { label: "资源", art: <path d="M3 12v9h4M3 12C0 9 2 3 6 2h12c3 1 5 6 3 8M3 12c3 2 6 0 7-3M12 22c-3-5-2-8 1-13 3 5 2 9-1 13zm0 0c3 0 8-1 10-8-5 0-7 2-10 8zm0 0c-2-2-4-4-5-5" /> },
  { label: "查阅", art: <><path d="M12 21 2 22V3c4-1 7-1 10 1 3-2 6-2 10-1v8M12 4v7" /><circle cx="16" cy="16" r="4.500" /><path d="m19.500 19.500 3 3" /></> },
  { label: "帮助", art: <><circle cx="12" cy="12" r="10.500" /><path d="M9 9c0-4 6.500-4 6.500 0 0 2.500-3.500 2.500-3.500 5.500M12 18v.2" /></> },
  { label: "更多", art: <><circle cx="3" cy="12" r="2" /><circle cx="12" cy="12" r="2" /><circle cx="21" cy="12" r="2" /></> },
];

function Rail() {
  return (
    <aside className="flex w-[71px] shrink-0 flex-col border-l border-[#cfd0d2] pt-[18px]">
      {RAIL.map((r, i) => (
        <button key={r.label} aria-label={r.label} className={"flex items-center justify-center " + (i === 0 ? "h-[27px]" : "h-[50px]")}>
          <Icon size={21} color={i === 0 ? "#999999" : "#444444"} sw={1.600}>{r.art}</Icon>
        </button>
      ))}
    </aside>
  );
}

function Workspace() {
  return (
    <main className="flex flex-1">
      <SlideList />
      <div className="flex min-w-0 flex-1 flex-col">
        <div className="relative flex flex-1 items-start justify-center pt-[25px] pr-[51px]">
          <Slide />
          <svg width="7" height="6" viewBox="0 0 8 7" className="absolute top-2 right-[7px]" aria-hidden="true"><path d="M0 7 4 0l4 7z" fill="#666" /></svg>
          <span className="absolute right-[6px] bottom-[171px] h-[54px] w-[9px] rounded-full bg-[#c9cacb]" />
          <button aria-label="小窗播放" className="absolute right-[-14px] bottom-[397px] flex size-12 items-center justify-center rounded-xl bg-[#7f7f80]">
            <Icon size={28} color="#ffffff" sw={2}><path d="M10 21H2V2h19v8M5 5l5 5M10 6v4H6" /><rect x="14" y="13" width="8" height="8" rx="1" /></Icon>
          </button>
          <button aria-label="播放" className="absolute right-[-24px] bottom-[7px] z-10 flex">
            <svg width="68" height="67" viewBox="0 0 68 67" className="drop-shadow-md" aria-hidden="true">
              <path d="m20 3 7 14M49 3l-7 14" stroke="#fff" strokeWidth="6" strokeLinecap="round" />
              <rect y="12" width="68" height="54" rx="14" fill="#fff" />
              <path d="M25 29v20q0 3 3 2l18-11q2-1 0-3L28 27q-3-1-3 2z" fill="#dcdcdc" stroke="#c4c4c4" />
              <path d="m30 38 4-5 4 5zM30 44l4-5 4 5z" fill="#777" />
              <path d="m31 17 3 5 3-5zM31 54l3 4 3-4zM31 59l3 4 3-4z" fill="#dddddd" />
            </svg>
          </button>
        </div>
        <div className="flex h-[41px] items-center border-t border-[#cfd0d2] pb-1 pl-[11px]">
          <input aria-label="备注" placeholder="单击此处添加备注" className="w-full bg-transparent text-[17px] outline-none placeholder:text-[#8c8c8c]" />
        </div>
      </div>
      <Rail />
    </main>
  );
}

/* ---------- status bar ---------- */

function StatusBar() {
  return (
    <footer className="flex h-[31px] shrink-0 items-center border-y border-[#c8c9cb] pl-4 text-[15px] whitespace-nowrap">
      <span>幻灯片 53 / 63</span>
      <VSep className="mr-[19px] ml-[12px] h-[18px]" />
      <button className="flex items-center gap-[5px]"><Icon size={19} sw={1.800}>{RAIL[5].art}</Icon><span className="text-base">WPS</span></button>
      <VSep className="mr-[21px] ml-[16px] h-[18px]" />
      <button className="flex items-center gap-[9px]">
        <svg width="14" height="14" viewBox="0 0 16 16" aria-hidden="true"><path d="M8 1 15.500 15H.5z" fill="#f3b23c" stroke="#f3b23c" strokeLinejoin="round" /><path d="M8 5.500v5M8 12v1.500" stroke="#6b3c08" strokeWidth="1.800" /></svg>
        缺失字体
      </button>
      <div className="mr-[23px] ml-auto flex items-center">
        <button className="flex items-center gap-[5px]"><Icon size={18}><path d="M3 10c3 2 5 1 9-1 4 2 6 3 9 1v9c-4 3-6 4-9 4s-5-1-9-4zM6 7c0-7 12-7 12 0" /></Icon>智能美化<Caret /></button>
        <VSep className="mr-[19px] ml-[18px] h-[18px]" />
        <button className="flex items-center gap-[5px]"><Icon size={18}><path d="M2 4h9M15 2l3 3 3-3M4 12h17M2 21h20" /></Icon>备注<Caret /></button>
        <button className="ml-[25px] flex items-center gap-[5px]"><Icon size={19}><path d="M12 19H8l-6 3V3h20v10M19 16v7M15.500 19.500h7" /></Icon>批注</button>
        <VSep className="mr-[12px] ml-[17px] h-[18px]" />
        <button aria-label="普通视图" className="flex h-[29px] w-[29px] items-center justify-center rounded bg-[#cfd0d1]"><Icon size={19}><rect x="2" y="3" width="20" height="18" rx="2" /><path d="M7 7v10" /></Icon></button>
        <button aria-label="浏览视图" className="ml-4 flex"><Icon size={19}><rect x="2" y="3" width="7" height="7" rx="1" /><rect x="15" y="3" width="7" height="7" rx="1" /><rect x="2" y="15" width="7" height="7" rx="1" /><rect x="15" y="15" width="7" height="7" rx="1" /></Icon></button>
        <button aria-label="阅读视图" className="ml-[21px] flex"><Icon size={19}><path d="M12 22c-2-3-5-3-9-3V4c5-1 7 0 9 2 2-2 4-3 9-2v15c-4 0-7 0-9 3zM12 6v10" /></Icon></button>
        <VSep className="mr-[11px] ml-[16px] h-[18px]" />
        <button aria-label="放映" className="flex h-[22px] w-[25px] items-center justify-center rounded bg-[#f36f17]"><svg width="8" height="10" viewBox="0 0 8 10" aria-hidden="true"><path d="M0 0 8 5 0 10z" fill="#fff" /></svg></button>
        <button aria-label="放映选项" className="ml-[10px] flex"><Caret /></button>
        <VSep className="mr-[17px] ml-[15px] h-[18px]" />
        <button aria-label="适应窗口" className="flex"><Icon size={19}><path d="M2 8V4a2 2 0 0 1 2-2h3M17 2h3a2 2 0 0 1 2 2v4M22 16v4a2 2 0 0 1-2 2h-3M7 22H4a2 2 0 0 1-2-2v-4M8 7h8v10H8z" /></Icon></button>
        <button className="ml-[27px] flex items-center gap-5">79%<Caret /></button>
        <button aria-label="缩小" className="ml-[22px] flex"><Icon size={16} sw={3.500}><path d="M2 12h20" /></Icon></button>
        <input
          type="range"
          aria-label="缩放"
          min={0}
          max={100}
          defaultValue={38}
          className="mx-[17px] h-[3px] w-[132px] appearance-none rounded bg-linear-to-r from-[#2f62c0] from-38% to-[#b9babc] to-38% [&::-webkit-slider-thumb]:size-[11px] [&::-webkit-slider-thumb]:appearance-none [&::-webkit-slider-thumb]:rounded-full [&::-webkit-slider-thumb]:border-[3px] [&::-webkit-slider-thumb]:border-white [&::-webkit-slider-thumb]:bg-[#8a8a8a] [&::-webkit-slider-thumb]:shadow"
        />
        <button aria-label="放大" className="flex"><Icon size={15} sw={3.500}><path d="M12 2v20M2 12h20" /></Icon></button>
      </div>
    </footer>
  );
}

/* ---------- taskbar ---------- */

const APPS: { label: string; dot?: "gray" | "blue"; lit?: boolean; art: ReactNode }[] = [
  { label: "开始菜单", art: <g fill="#0c84dc"><path d="M1 1h14v14H1z" fill="#2fa8ee" /><path d="M16.500 1h14v14h-14zM1 16.500h14v14H1z" fill="#1592e2" /><path d="M16.500 16.500h14v14h-14z" fill="#0674d0" /></g> },
  { label: "搜索", art: <g fill="none" stroke="#2a2a2a" strokeWidth="3"><circle cx="14" cy="13" r="10.500" /><path d="m21 21 8 8" strokeWidth="4" /></g> },
  { label: "draw.io", dot: "gray", art: <g><rect x="1" width="30" height="31" rx="2" fill="#f58a07" /><path d="M20 8 31 20v11H14z" fill="#d97706" /><path d="m16 9-6 13M16 9l6 13" stroke="#fff" strokeWidth="2.500" /><path d="M11.500 4h9v7h-9zM5 19h9v7H5zM18 19h9v7h-9z" fill="#fff" /></g> },
  { label: "IntelliJ IDEA", dot: "gray", art: <g><path d="M1 3 14 5v22l-6 4L2 25z" fill="#f9445c" /><path d="m1 3 8 1v8H2z" fill="#f97a12" /><path d="M13 0h18v19l-8 7z" fill="#1271f5" /><path d="M22 22h7v8H18z" fill="#fb7c28" /><path d="M7 6h19v20H7z" fill="#000" /><path d="M10 9.500h4M12 9.500v6M10 15.500h4M16 9.500h4v5q0 1-2 1h-2M10 22.500h7" stroke="#fff" strokeWidth="1.600" fill="none" /></g> },
  { label: "WPS", dot: "blue", lit: true, art: <g fill="none" stroke="#ea3a22" strokeWidth="4"><path d="M1 7.500h8l4 9M4 8l6 17 6-15 4 15h1l7-17.500H15.500" strokeLinejoin="bevel" /></g> },
  { label: "文件资源管理器", art: <g><path d="M1 3q0-1 1-1h10l3 4h15q1 0 1 1v6H1z" fill="#d9980e" /><path d="M1 9h30v19q0 2-2 2H3q-2 0-2-2z" fill="#fdc62d" /><path d="M6 30v-6q0-2 2-2h16q2 0 2 2v6z" fill="#1272c8" /><path d="M10 26h12" stroke="#0a4f96" strokeWidth="1.500" /></g> },
  { label: "Edge", dot: "gray", lit: true, art: <g><path d="M2 14C4 5 10 1 17 1c8 0 14 6 14 13 0 5-4 7-8 7-3 0-5-1-4-3 1-3-1-7-6-7-6 0-9 3-11 3z" fill="#2fc28e" /><path d="M2 15C4 6 10 2 17 2c-5 3-6 6-5 9-5 1-9 7-5 15-4-3-6-7-5-11z" fill="#2396dc" /><path d="M13 11c-7 2-8 11-2 15 5 4 12 3 16-2-6 2-13-1-13-6 0-3 2-4 2-5 0-1-1-2-3-2zM2 16c0 10 8 15 15 14-8-2-12-11-7-18-3 0-6 2-8 4z" fill="#0f62b8" /></g> },
  { label: "终端", dot: "gray", art: <g><rect x="1" y="4" width="30" height="24" rx="2" fill="#393939" /><path d="M1 8V6q0-2 2-2h26q2 0 2 2v2z" fill="#8d8d8d" /><path d="m6 12 5 5-5 6" stroke="#d8d8d8" strokeWidth="2.800" fill="none" /><path d="M14 23.500h9" stroke="#fff" strokeWidth="2.200" /></g> },
];

function Taskbar() {
  return (
    <nav aria-label="任务栏" className="relative flex h-[59px] shrink-0 items-center justify-center bg-[#eeeeee]">
      <div className="flex gap-[6px]">
        {APPS.map((a) => (
          <button key={a.label} aria-label={a.label} className={"relative flex size-[49px] items-center justify-center rounded-md " + (a.lit ? (a.label === "Edge" ? "bg-[#fbfbfb]" : "bg-[#f3f3f3]") : "")}>
            <svg width="31" height="31" viewBox="0 0 32 32" aria-hidden="true">{a.art}</svg>
            {a.dot && <span className={"absolute bottom-0 h-1 rounded-full " + (a.dot === "blue" ? "w-[17px] bg-[#6f9fc8]" : "w-2 bg-[#8c8c8c]")} />}
            {a.label === "Edge" && (
              <svg width="20" height="30" viewBox="0 0 20 30" className="absolute top-[27px] left-[25px] z-10" aria-hidden="true"><path d="M1 1v23l5.500-5 4 9.500 4-2-4-9H18z" fill="#fff" stroke="#222" strokeWidth="1.300" /></svg>
            )}
          </button>
        ))}
      </div>
      <div className="absolute right-[24px] flex items-center text-[18px]">
        <button aria-label="显示隐藏的图标" className="flex"><Icon size={18} color="#222" sw={2}><path d="m4 16 8-8 8 8" /></Icon></button>
        <button aria-label="助手" className="ml-[21px] flex">
          <svg width="20" height="20" viewBox="0 0 20 20" fill="none" stroke="#e4685f" strokeWidth="1.500" aria-hidden="true">
            {[0, 60, 120, 180, 240, 300].map((r) => <path key={r} d="M10 10C6 7 7 2 11 1.500 14 3 13 6 10 10" transform={`rotate(${r} 10 10)`} />)}
            <circle cx="10" cy="10" r="2" stroke="#6a8fe0" />
          </svg>
        </button>
        <button aria-label="麦克风" className="ml-[20px] flex"><Icon size={21} color="#1d5aa8" sw={1.800}><rect x="8.500" y="1" width="7" height="14" rx="3.500" fill="#a8c8ea" /><path d="M4.500 10v1.500a7.500 7.500 0 0 0 15 0V10M12 19v4" /></Icon></button>
        <button className="ml-[20px]">英</button>
        <button className="ml-[31px]">拼</button>
        <button aria-label="网络" className="ml-[28px] flex"><Icon size={20} color="#222" sw={1.800}><path d="M1.500 9a15 15 0 0 1 21 0M5 13a10 10 0 0 1 14 0M8.500 16.500a5 5 0 0 1 7 0" /><circle cx="12" cy="20" r="1.200" fill="#222" /></Icon></button>
        <button aria-label="音量" className="ml-[9px] flex"><Icon size={19} color="#222"><path d="M2 9v6h4l6 5V4L6 9zM15.500 9q2 3 0 6M18.500 6q4 6 0 12" /><path d="M21.500 4q4 8 0 16" stroke="#aaa" /></Icon></button>
        <button aria-label="电池" className="ml-[11px] flex"><Icon size={21} color="#222"><path d="M5 10v8a2 2 0 0 0 2 2h12a2 2 0 0 0 2-2V8a2 2 0 0 0-2-2H9" /><path d="M8 17v-4l3-4h7v8z" fill="#222" /><path d="M22.500 11v4" strokeWidth="2.500" /><path d="M5 1 2 7h4l-2 5 5-7H5z" fill="#222" /></Icon></button>
        <button aria-label="通知" className="ml-[14px] flex"><Icon size={22} color="#0b3f94"><path d="M12 2a7 7 0 0 0-7 7v6l-2 4h18l-2-4V9a7 7 0 0 0-7-7zM9.500 21.500q2.500 2 5 0z" fill="#0b3f94" /></Icon></button>
      </div>
    </nav>
  );
}

/* ---------- floating comments and watermark ---------- */

const OUTLINE = "[text-shadow:1px_0_1px_#222,-1px_0_1px_#222,0_1px_1px_#222,0_-1px_1px_#222,1px_1px_1px_#222]";

function Overlays() {
  const line = "absolute text-[31px] leading-[44px] font-bold whitespace-nowrap text-white font-['Noto_Sans_CJK_SC'] " + OUTLINE;
  return (
    <div className="pointer-events-none absolute inset-x-0 top-0 h-[110px] overflow-hidden">
      <span className={line + " top-0 -left-[20px]"}>2025-7-11</span>
      <span className={line + " top-0 left-[593px]"}>小狐狸快出来</span>
      <span className={line + " top-0 right-0"}>越往后,</span>
      <div className="absolute top-[42px] right-[35px] flex items-center gap-[20px] text-white/75">
        <span className="text-[37px] leading-[60px] font-bold">尚硅谷</span>
        <span className="font-[Lato] text-[54px] leading-[60px] font-bold text-white/50 italic">bilibili</span>
      </div>
    </div>
  );
}

export default function App() {
  return (
    <div className="relative flex min-h-screen flex-col overflow-hidden bg-[#e5e6e8] font-['Noto_Sans','Noto_Sans_CJK_SC',sans-serif] text-[#262626]">
      <TitleBar />
      <MenuRow />
      <Ribbon />
      <Workspace />
      <StatusBar />
      <Taskbar />
      <Overlays />
    </div>
  );
}
